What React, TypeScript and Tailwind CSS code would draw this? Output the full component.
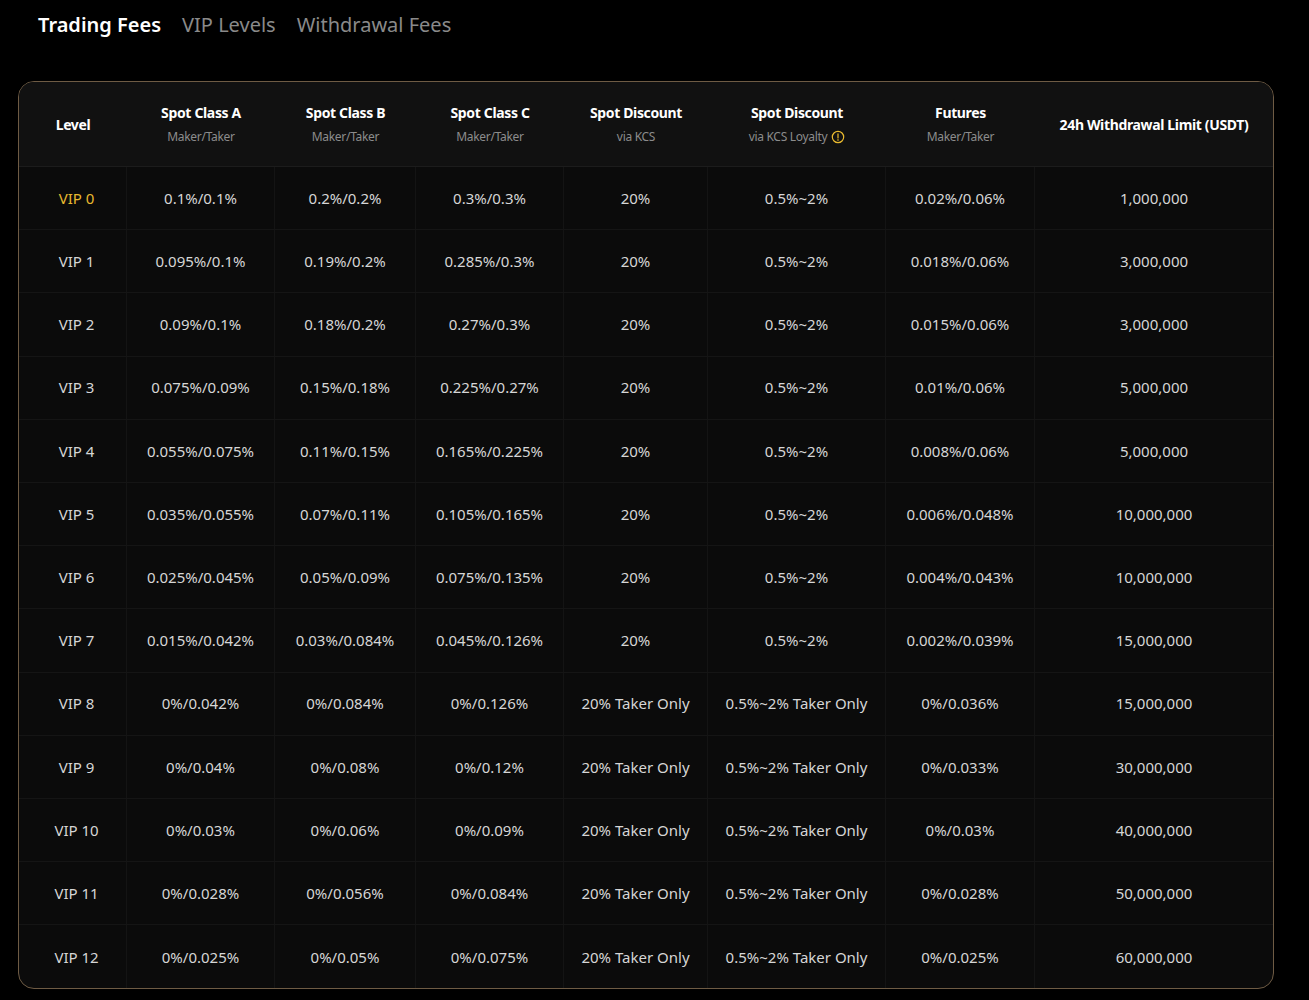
const ROWS = [
  ["VIP 0", "0.1%/0.1%", "0.2%/0.2%", "0.3%/0.3%", "20%", "0.5%~2%", "0.02%/0.06%", "1,000,000"],
  ["VIP 1", "0.095%/0.1%", "0.19%/0.2%", "0.285%/0.3%", "20%", "0.5%~2%", "0.018%/0.06%", "3,000,000"],
  ["VIP 2", "0.09%/0.1%", "0.18%/0.2%", "0.27%/0.3%", "20%", "0.5%~2%", "0.015%/0.06%", "3,000,000"],
  ["VIP 3", "0.075%/0.09%", "0.15%/0.18%", "0.225%/0.27%", "20%", "0.5%~2%", "0.01%/0.06%", "5,000,000"],
  ["VIP 4", "0.055%/0.075%", "0.11%/0.15%", "0.165%/0.225%", "20%", "0.5%~2%", "0.008%/0.06%", "5,000,000"],
  ["VIP 5", "0.035%/0.055%", "0.07%/0.11%", "0.105%/0.165%", "20%", "0.5%~2%", "0.006%/0.048%", "10,000,000"],
  ["VIP 6", "0.025%/0.045%", "0.05%/0.09%", "0.075%/0.135%", "20%", "0.5%~2%", "0.004%/0.043%", "10,000,000"],
  ["VIP 7", "0.015%/0.042%", "0.03%/0.084%", "0.045%/0.126%", "20%", "0.5%~2%", "0.002%/0.039%", "15,000,000"],
  ["VIP 8", "0%/0.042%", "0%/0.084%", "0%/0.126%", "20% Taker Only", "0.5%~2% Taker Only", "0%/0.036%", "15,000,000"],
  ["VIP 9", "0%/0.04%", "0%/0.08%", "0%/0.12%", "20% Taker Only", "0.5%~2% Taker Only", "0%/0.033%", "30,000,000"],
  ["VIP 10", "0%/0.03%", "0%/0.06%", "0%/0.09%", "20% Taker Only", "0.5%~2% Taker Only", "0%/0.03%", "40,000,000"],
  ["VIP 11", "0%/0.028%", "0%/0.056%", "0%/0.084%", "20% Taker Only", "0.5%~2% Taker Only", "0%/0.028%", "50,000,000"],
  ["VIP 12", "0%/0.025%", "0%/0.05%", "0%/0.075%", "20% Taker Only", "0.5%~2% Taker Only", "0%/0.025%", "60,000,000"],
];

const HEAD: [string, string | null][] = [
  ["Level", null],
  ["Spot Class A", "Maker/Taker"],
  ["Spot Class B", "Maker/Taker"],
  ["Spot Class C", "Maker/Taker"],
  ["Spot Discount", "via KCS"],
  ["Spot Discount", "via KCS Loyalty"],
  ["Futures", "Maker/Taker"],
  ["24h Withdrawal Limit (USDT)", null],
];

const COLS = "grid grid-cols-[108px_148px_141px_148px_144px_178px_149px_1fr]";

export default function App() {
  return (
    <div className="min-h-[1000px] bg-black px-[18px] pt-[10px] pb-3 font-['Liberation_Sans',Arial,sans-serif]">
      <div className="flex items-center gap-[21px] pl-5 text-[20px]">
        <span className="font-semibold text-white">Trading Fees</span>
        <span className="text-[#8a8a8a]">VIP Levels</span>
        <span className="text-[#8a8a8a]">Withdrawal Fees</span>
      </div>

      <div className="mt-[41px] w-[1256px] overflow-hidden rounded-2xl border border-[#6e5b44] bg-[#0b0b0b]">
        <div className={`${COLS} h-[85px] border-b border-[#1c1c1c] bg-[#111111]`}>
          {HEAD.map(([t, s], i) => (
            <div key={i} className="flex flex-col items-center justify-center">
              <span className="text-[14px] font-bold tracking-tight text-white">{t}</span>
              {s && (
                <span className="mt-[5px] flex items-center gap-1 text-[12px] tracking-tight text-[#8c8c8c]">
                  {s}
                  {i === 5 && (
                    <svg width="14" height="14" viewBox="0 0 16 16" fill="none" stroke="#e8b92f" strokeWidth="1.4">
                      <circle cx="8" cy="8" r="6.5" />
                      <path d="M8 4.5v4.5M8 11v.8" strokeLinecap="round" />
                    </svg>
                  )}
                </span>
              )}
            </div>
          ))}
        </div>
        {ROWS.map((r, ri) => (
          <div key={ri} className={`${COLS} h-[63.2px] ${ri < ROWS.length - 1 ? "border-b border-[#151515]" : ""}`}>
            {r.map((c, ci) => (
              <div
                key={ci}
                className={`flex items-center justify-center text-[15px] ${ci < 7 ? "border-r border-[#141414]" : ""} ${
                  ci === 0 && ri === 0 ? "text-[#e8b92f]" : "text-[#d6d6d6]"
                } ${ci === 0 ? "pl-2" : ""}`}
              >
                {c}
              </div>
            ))}
          </div>
        ))}
      </div>
    </div>
  );
}
